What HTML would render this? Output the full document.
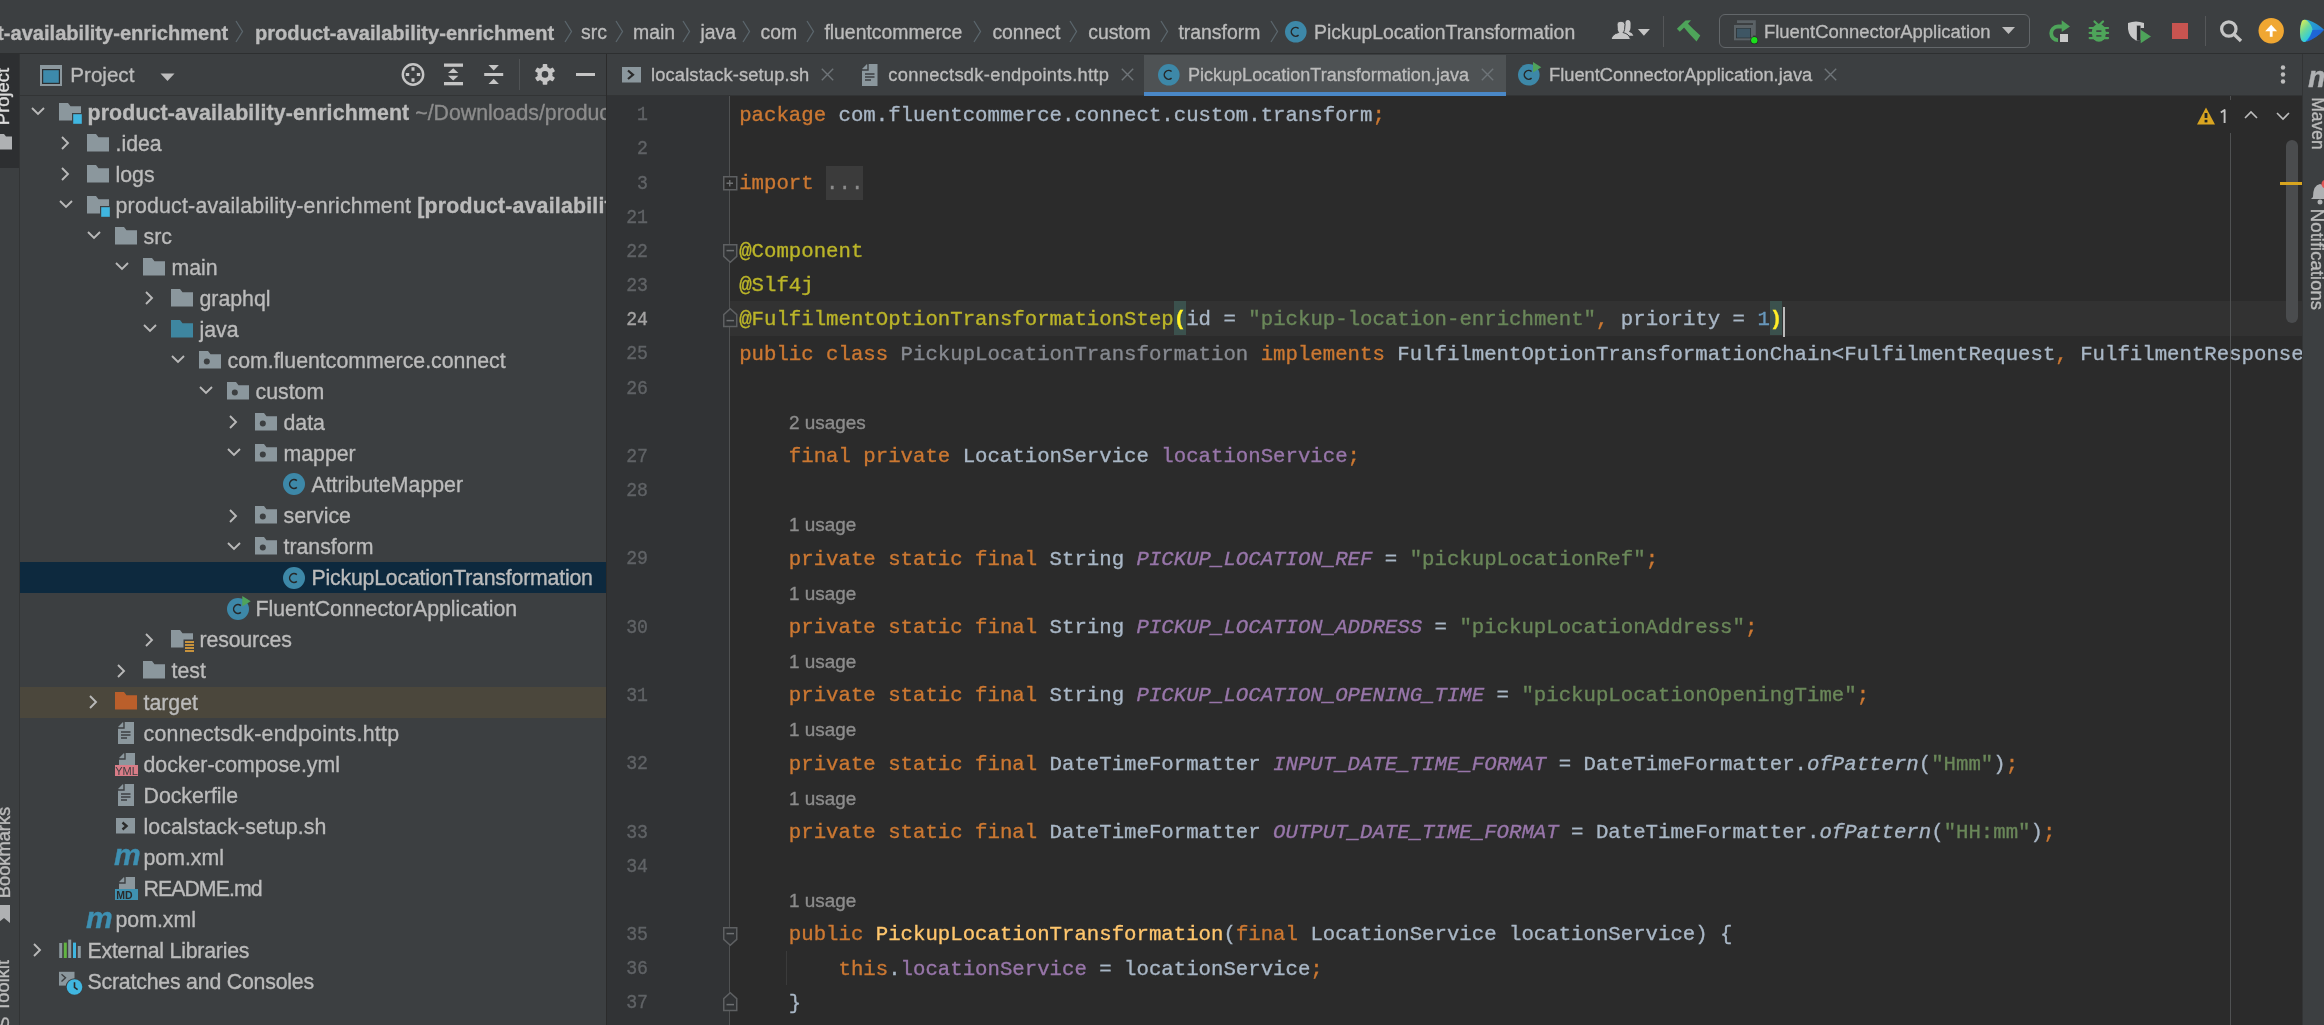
<!DOCTYPE html>
<html><head><meta charset="utf-8"><title>IntelliJ</title>
<style>
html,body{margin:0;padding:0;width:2324px;height:1025px;overflow:hidden;background:#3c3f41}
body{position:relative;font-family:"Liberation Sans",sans-serif}
svg{overflow:visible}
.root{position:absolute;left:0;top:0;width:2324px;height:1025px;overflow:hidden;will-change:transform}
.root div{-webkit-text-stroke-width:0.35px}
</style></head><body><div class="root">
<div style="position:absolute;left:0;top:0;width:2324px;height:1025px;background:#3c3f41"></div>
<div style="position:absolute;left:0px;top:53px;width:2324px;height:1px;background:#2d2f30;"></div>
<div style="position:absolute;left:0px;top:54px;width:19px;height:971px;background:#3c3f41;"></div>
<div style="position:absolute;left:0px;top:54px;width:19px;height:114px;background:#2d2f31;"></div>
<div style="position:absolute;left:19px;top:54px;width:1px;height:971px;background:#323435;"></div>
<div style="position:absolute;left:20px;top:95px;width:586px;height:1px;background:#323435;"></div>
<div style="position:absolute;left:606px;top:54px;width:1px;height:971px;background:#2b2b2b;"></div>
<div style="position:absolute;left:607px;top:95px;width:1696px;height:1px;background:#323435;"></div>
<div style="position:absolute;left:607px;top:96px;width:123px;height:929px;background:#313335;"></div>
<div style="position:absolute;left:730px;top:96px;width:1573px;height:929px;background:#2b2b2b;"></div>
<div style="position:absolute;left:2302px;top:54px;width:1px;height:971px;background:#323435;"></div>
<div style="position:absolute;left:-71.00px;top:22.69px;font:normal bold 20.1px/20.1px 'Liberation Sans',sans-serif;color:#bbbbbb;white-space:pre;letter-spacing:0px;">product-availability-enrichment</div>
<svg style="position:absolute;left:235px;top:20px;" width="9" height="24" viewBox="0 0 9 24"><path d="M1 1 L7.5 11.5 L1 22" fill="none" stroke="#5b666c" stroke-width="1.3"/></svg>
<div style="position:absolute;left:255.00px;top:22.69px;font:normal bold 20.1px/20.1px 'Liberation Sans',sans-serif;color:#bbbbbb;white-space:pre;letter-spacing:0px;">product-availability-enrichment</div>
<svg style="position:absolute;left:564px;top:20px;" width="9" height="24" viewBox="0 0 9 24"><path d="M1 1 L7.5 11.5 L1 22" fill="none" stroke="#5b666c" stroke-width="1.3"/></svg>
<div style="position:absolute;left:581.00px;top:23.28px;font:normal normal 19.4px/19.4px 'Liberation Sans',sans-serif;color:#bbbbbb;white-space:pre;letter-spacing:0px;">src</div>
<svg style="position:absolute;left:615px;top:20px;" width="9" height="24" viewBox="0 0 9 24"><path d="M1 1 L7.5 11.5 L1 22" fill="none" stroke="#5b666c" stroke-width="1.3"/></svg>
<div style="position:absolute;left:633.00px;top:23.28px;font:normal normal 19.4px/19.4px 'Liberation Sans',sans-serif;color:#bbbbbb;white-space:pre;letter-spacing:0px;">main</div>
<svg style="position:absolute;left:682px;top:20px;" width="9" height="24" viewBox="0 0 9 24"><path d="M1 1 L7.5 11.5 L1 22" fill="none" stroke="#5b666c" stroke-width="1.3"/></svg>
<div style="position:absolute;left:700.50px;top:23.28px;font:normal normal 19.4px/19.4px 'Liberation Sans',sans-serif;color:#bbbbbb;white-space:pre;letter-spacing:0px;">java</div>
<svg style="position:absolute;left:742px;top:20px;" width="9" height="24" viewBox="0 0 9 24"><path d="M1 1 L7.5 11.5 L1 22" fill="none" stroke="#5b666c" stroke-width="1.3"/></svg>
<div style="position:absolute;left:760.50px;top:23.28px;font:normal normal 19.4px/19.4px 'Liberation Sans',sans-serif;color:#bbbbbb;white-space:pre;letter-spacing:0px;">com</div>
<svg style="position:absolute;left:806px;top:20px;" width="9" height="24" viewBox="0 0 9 24"><path d="M1 1 L7.5 11.5 L1 22" fill="none" stroke="#5b666c" stroke-width="1.3"/></svg>
<div style="position:absolute;left:824.40px;top:23.28px;font:normal normal 19.4px/19.4px 'Liberation Sans',sans-serif;color:#bbbbbb;white-space:pre;letter-spacing:0px;">fluentcommerce</div>
<svg style="position:absolute;left:973px;top:20px;" width="9" height="24" viewBox="0 0 9 24"><path d="M1 1 L7.5 11.5 L1 22" fill="none" stroke="#5b666c" stroke-width="1.3"/></svg>
<div style="position:absolute;left:992.40px;top:23.28px;font:normal normal 19.4px/19.4px 'Liberation Sans',sans-serif;color:#bbbbbb;white-space:pre;letter-spacing:0px;">connect</div>
<svg style="position:absolute;left:1069px;top:20px;" width="9" height="24" viewBox="0 0 9 24"><path d="M1 1 L7.5 11.5 L1 22" fill="none" stroke="#5b666c" stroke-width="1.3"/></svg>
<div style="position:absolute;left:1088.20px;top:23.28px;font:normal normal 19.4px/19.4px 'Liberation Sans',sans-serif;color:#bbbbbb;white-space:pre;letter-spacing:0px;">custom</div>
<svg style="position:absolute;left:1160px;top:20px;" width="9" height="24" viewBox="0 0 9 24"><path d="M1 1 L7.5 11.5 L1 22" fill="none" stroke="#5b666c" stroke-width="1.3"/></svg>
<div style="position:absolute;left:1178.40px;top:23.28px;font:normal normal 19.4px/19.4px 'Liberation Sans',sans-serif;color:#bbbbbb;white-space:pre;letter-spacing:0px;">transform</div>
<svg style="position:absolute;left:1270px;top:20px;" width="9" height="24" viewBox="0 0 9 24"><path d="M1 1 L7.5 11.5 L1 22" fill="none" stroke="#5b666c" stroke-width="1.3"/></svg>
<svg style="position:absolute;left:1284.2px;top:19.7px;" width="23.6" height="23.6" viewBox="0 0 23.6 23.6"><circle cx="11.8" cy="11.8" r="10.8" fill="#3d88a8"/><path d="M15.40 8.50 A4.4 4.4 0 1 0 15.40 15.10" fill="none" stroke="#262829" stroke-width="1.50" transform="translate(-0.80 0)"/></svg>
<div style="position:absolute;left:1314.00px;top:23.28px;font:normal normal 19.4px/19.4px 'Liberation Sans',sans-serif;color:#bbbbbb;white-space:pre;letter-spacing:0px;">PickupLocationTransformation</div>
<svg style="position:absolute;left:1600px;top:15px;" width="60" height="30" viewBox="0 0 60 30"><path d="M25.5 7.5 Q25.5 5 28 5 Q30.5 5 30.6 8.5 L30.5 13 Q30.3 15.5 29 16.8 Q32.5 18 33.3 20.5 L33.2 20.8 L25 20.8 Q24 18 21.5 16.5 Q22.5 15 24.5 14.5 Z" fill="#c5c5c5"/><path d="M17 9 Q17 6.2 21 6.2 Q25 6.2 25 9.5 L24.6 14.5 Q24.2 16.7 23 17.5 Q29.5 19 30.5 24.5 L11 24.5 Q12 19 18.7 17.5 Q17.6 16.5 17.3 14.5 Z" fill="#c5c5c5" stroke="#3c3f41" stroke-width="1"/><path d="M37.9 14 L49.9 14 L43.9 20.8Z" fill="#c5c5c5"/></svg>
<div style="position:absolute;left:1663px;top:16px;width:1px;height:31px;background:#555759;"></div>
<svg style="position:absolute;left:1674px;top:17px;" width="30" height="27" viewBox="0 0 30 27"><path d="M2.9 11.7 L11.5 3.6 L17 3.2 L13.5 7.3 L5.8 14.8 Z" fill="#4ea45a"/><path d="M9.2 9.6 L13 5.8 L19.5 12.2 L26.3 18.5 L22.5 24.5 L15.5 17 Z" fill="#4ea45a"/></svg>
<div style="position:absolute;left:1719px;top:14px;width:309px;height:32px;border:1.6px solid #63676a;border-radius:6px"></div>
<svg style="position:absolute;left:1733px;top:19px;" width="26" height="26" viewBox="0 0 26 26"><path d="M4 1.2 L22.8 1.2 L22.8 16.5 L20 16.5 L20 4.1 L4 4.1Z" fill="#5b6266"/><rect x="1" y="6" width="19" height="15.3" fill="#5b6266"/><rect x="3" y="9" width="15" height="10.3" fill="#2f3436"/><rect x="3.8" y="9.6" width="13.4" height="9" fill="#3e5664"/><circle cx="21.3" cy="21.3" r="3.9" fill="#242628"/><circle cx="21.3" cy="21.3" r="3.2" fill="#1be01b"/></svg>
<div style="position:absolute;left:1764.00px;top:22.58px;font:normal normal 18.45px/18.45px 'Liberation Sans',sans-serif;color:#bbbbbb;white-space:pre;letter-spacing:0px;">FluentConnectorApplication</div>
<svg style="position:absolute;left:2002px;top:27px;" width="14" height="8" viewBox="0 0 14 8"><path d="M0 0 L13 0 L6.5 7Z" fill="#bdbdbd"/></svg>
<svg style="position:absolute;left:2048px;top:20px;" width="24" height="24" viewBox="0 0 24 24"><path d="M14 6.5 L10 6.5 A6.8 6.8 0 0 0 10 20.1" fill="none" stroke="#4ea45a" stroke-width="3.8"/><path d="M13.7 0.3 L22 6.5 L13.7 12.1Z" fill="#4ea45a"/><rect x="11.3" y="13.3" width="9.4" height="9.2" fill="#3c3f41"/><rect x="12" y="14" width="8" height="8" fill="#c9c9c9"/></svg>
<svg style="position:absolute;left:2088px;top:20px;" width="22" height="24" viewBox="0 0 22 24"><path d="M6.5 1.5 L10.6 5.5 M15 1.5 L10.9 5.5" stroke="#4ea45a" stroke-width="2.3" stroke-linecap="round"/><ellipse cx="10.9" cy="12.8" rx="7.3" ry="9" fill="#4ea45a"/><path d="M1.6 8 L20.1 8 M1.6 12.9 L20.1 12.9 M1.6 18.1 L20.1 18.1" stroke="#4ea45a" stroke-width="2.1" stroke-linecap="round"/><path d="M1 10.4 L4 10.4 M1 15.5 L4.2 15.5 M17.6 10.4 L21 10.4 M17.6 15.5 L21 15.5" stroke="#3c3f41" stroke-width="1.6"/><rect x="8.3" y="10.3" width="5.1" height="1.6" fill="#3c3f41"/><rect x="8.3" y="15.2" width="5.1" height="1.4" fill="#3c3f41"/></svg>
<svg style="position:absolute;left:2126px;top:19px;" width="28" height="26" viewBox="0 0 28 26"><path d="M2 4 Q10 1 18 4 L18 9 L14.5 9 L14.5 21 L10 21.5 Q3 18 2 10 Z" fill="#c8c8c8"/><rect x="10.6" y="6.6" width="3.9" height="14.6" fill="#2f3133"/><rect x="9.6" y="6.6" width="1" height="14.6" fill="#c8c8c8"/><path d="M14.7 10.8 L25 17.5 L14.7 24.2Z" fill="#4ea45a"/></svg>
<div style="position:absolute;left:2172px;top:23px;width:15.5px;height:16px;background:#c75450;"></div>
<div style="position:absolute;left:2205px;top:15.6px;width:1px;height:30.7px;background:#555759;"></div>
<svg style="position:absolute;left:2218px;top:18px;" width="26" height="26" viewBox="0 0 26 26"><circle cx="10.8" cy="11" r="7.2" fill="none" stroke="#c5c5c5" stroke-width="3.2"/><path d="M16.2 16.5 L23 23" stroke="#c5c5c5" stroke-width="3.3"/></svg>
<svg style="position:absolute;left:2257px;top:17px;" width="28" height="28" viewBox="0 0 28 28"><circle cx="14.2" cy="13.8" r="12.7" fill="#f0a732"/><path d="M14.2 7.8 L20.1 14.2 L8.2 14.2Z" fill="#fff"/><rect x="12.8" y="13" width="2.8" height="6.8" fill="#fff"/></svg>
<svg style="position:absolute;left:2299px;top:19px;" width="30" height="25" viewBox="0 0 30 25"><defs><linearGradient id="jbg" x1="0" y1="0" x2="0.6" y2="1"><stop offset="0" stop-color="#f3f245"/><stop offset="0.5" stop-color="#6ed99a"/><stop offset="1" stop-color="#1ec8f0"/></linearGradient><linearGradient id="jbb" x1="0" y1="0" x2="1" y2="1"><stop offset="0" stop-color="#2ab7c9"/><stop offset="1" stop-color="#1f6fe0"/></linearGradient></defs><path d="M3 2 Q5 0 9 1 Q18 4 25 10.8 Q18 19 6 23 Q2 23 1.5 18 Q0 10 3 2Z" fill="url(#jbb)"/><path d="M3 2 Q5 0 8 1.5 Q13 6 13.5 11 Q12 17 6 23 Q2 23 1.5 18 Q0 10 3 2Z" fill="url(#jbg)"/><path d="M13.5 11 L25 10.8 Q18 19 8 22.8 Q12 17 13.5 11Z" fill="#1d5fd6" opacity="0.85"/></svg>
<svg style="position:absolute;left:40px;top:65px;" width="22" height="21" viewBox="0 0 22 21"><rect x="0" y="0" width="22" height="21" fill="#8c989e"/><rect x="2" y="4" width="18" height="15" fill="#2c2e30"/><rect x="3.2" y="5.2" width="15.6" height="12.6" fill="#3d8aab"/></svg>
<div style="position:absolute;left:70.30px;top:65.16px;font:normal normal 20.6px/20.6px 'Liberation Sans',sans-serif;color:#bbbbbb;white-space:pre;letter-spacing:0px;">Project</div>
<svg style="position:absolute;left:160px;top:73px;" width="15" height="9" viewBox="0 0 15 9"><path d="M0.5 0.5 L14.5 0.5 L7.5 8Z" fill="#bdbdbd"/></svg>
<svg style="position:absolute;left:401px;top:63px;" width="24" height="24" viewBox="0 0 24 24"><circle cx="12" cy="11.5" r="10.2" fill="none" stroke="#c5c5c5" stroke-width="2.4"/><path d="M12 4.3 L12 7.7 M12 15.3 L12 18.7 M4.8 11.5 L8.2 11.5 M15.8 11.5 L19.2 11.5" stroke="#c5c5c5" stroke-width="3"/></svg>
<svg style="position:absolute;left:443px;top:62px;" width="21" height="25" viewBox="0 0 21 25"><rect x="1" y="1.5" width="19" height="3.3" fill="#c5c5c5"/><rect x="1" y="20" width="19" height="3.3" fill="#c5c5c5"/><path d="M5 11 L10.2 6.3 L15.4 11Z M5 13.8 L10.2 18.6 L15.4 13.8Z" fill="#c5c5c5"/></svg>
<svg style="position:absolute;left:483px;top:62px;" width="21" height="25" viewBox="0 0 21 25"><rect x="1.2" y="11" width="19" height="3" fill="#c5c5c5"/><path d="M5.5 3 L15.9 3 L10.7 8.6Z M5.5 21.9 L15.9 21.9 L10.7 16.7Z" fill="#c5c5c5"/></svg>
<div style="position:absolute;left:518.5px;top:59px;width:1px;height:31px;background:#505355;"></div>
<svg style="position:absolute;left:535px;top:63px;" width="21" height="24" viewBox="0 0 21 24"><g transform="translate(10 11.4)"><rect x="-2.3" y="-10.3" width="4.6" height="5" rx="0.8" fill="#c5c5c5" transform="rotate(0)"/><rect x="-2.3" y="-10.3" width="4.6" height="5" rx="0.8" fill="#c5c5c5" transform="rotate(60)"/><rect x="-2.3" y="-10.3" width="4.6" height="5" rx="0.8" fill="#c5c5c5" transform="rotate(120)"/><rect x="-2.3" y="-10.3" width="4.6" height="5" rx="0.8" fill="#c5c5c5" transform="rotate(180)"/><rect x="-2.3" y="-10.3" width="4.6" height="5" rx="0.8" fill="#c5c5c5" transform="rotate(240)"/><rect x="-2.3" y="-10.3" width="4.6" height="5" rx="0.8" fill="#c5c5c5" transform="rotate(300)"/><circle r="7.6" fill="#c5c5c5"/><circle r="3.3" fill="#3c3f41"/></g></svg>
<div style="position:absolute;left:576px;top:73px;width:19px;height:3px;background:#c5c5c5;"></div>
<div style="position:absolute;left:-33.5px;top:87px;width:70px;height:19px;transform:rotate(-90deg);font:18.4px/19px 'Liberation Sans',sans-serif;color:#dcdcdc;text-align:center">Project</div>
<svg style="position:absolute;left:0px;top:134px;" width="13" height="16" viewBox="0 0 13 16"><path d="M-3 0 L4 0 L6 2.5 L12 2.5 L12 15.5 L-3 15.5Z" fill="#afb1b3"/></svg>
<div style="position:absolute;left:-47.5px;top:843px;width:100px;height:19px;transform:rotate(-90deg);font:18.3px/19px 'Liberation Sans',sans-serif;color:#bbbbbb;text-align:center">Bookmarks</div>
<svg style="position:absolute;left:0px;top:905px;" width="12" height="20" viewBox="0 0 12 20"><path d="M-2 0 L10 0 L10 18 L4 13 L-2 18Z" fill="#afb1b3"/></svg>
<div style="position:absolute;left:-58px;top:988px;width:120px;height:19px;transform:rotate(-90deg);font:18.3px/19px 'Liberation Sans',sans-serif;color:#bbbbbb;text-align:left;white-space:nowrap">AWS Toolkit</div>
<div style="position:absolute;left:20px;top:562.2px;width:585.5px;height:30.8px;background:#0d293e;"></div>
<div style="position:absolute;left:20px;top:686.5px;width:585.5px;height:31px;background:#4b473c;"></div>
<div style="position:absolute;left:0;top:0;width:605.5px;height:1025px;overflow:hidden">
<svg style="position:absolute;left:31.1px;top:107.0px;" width="14" height="9" viewBox="0 0 14 9"><path d="M1 1 L7 7 L13 1" fill="none" stroke="#b9b9b9" stroke-width="1.9"/></svg>
<svg style="position:absolute;left:59px;top:102.5px;" width="24" height="22" viewBox="0 0 24 22"><path d="M0 0 L9 0 L11.5 3.2 L22 3.2 L22 17.5 L0 17.5Z" fill="#8b979d"/><rect x="13" y="10" width="11" height="12" fill="#3c3f41"/><rect x="14.2" y="11.2" width="8.6" height="9.6" fill="#40b6e0"/></svg>
<div style="position:absolute;left:87.5px;top:102.77px;font:21.3px/21.3px 'Liberation Sans',sans-serif;color:#bbbbbb;white-space:pre"><span style="font-weight:bold;color:#bbbbbb;letter-spacing:0.15px">product-availability-enrichment</span><span style="font-weight:normal;color:#8c8c8c;letter-spacing:0px"> ~/Downloads/product-availability-enrichment</span></div>
<svg style="position:absolute;left:60.599999999999994px;top:136.04px;" width="9" height="14" viewBox="0 0 9 14"><path d="M1 1 L7 7 L1 13" fill="none" stroke="#b9b9b9" stroke-width="1.9"/></svg>
<svg style="position:absolute;left:87px;top:133.54px;" width="22" height="18" viewBox="0 0 22 18"><path d="M0 0 L9 0 L11.5 3.2 L22 3.2 L22 17.5 L0 17.5Z" fill="#8b979d"/></svg>
<div style="position:absolute;left:115.5px;top:133.81px;font:21.3px/21.3px 'Liberation Sans',sans-serif;color:#bbbbbb;white-space:pre"><span style="font-weight:normal;color:#bbbbbb;letter-spacing:0px">.idea</span></div>
<svg style="position:absolute;left:60.599999999999994px;top:167.07999999999998px;" width="9" height="14" viewBox="0 0 9 14"><path d="M1 1 L7 7 L1 13" fill="none" stroke="#b9b9b9" stroke-width="1.9"/></svg>
<svg style="position:absolute;left:87px;top:164.57999999999998px;" width="22" height="18" viewBox="0 0 22 18"><path d="M0 0 L9 0 L11.5 3.2 L22 3.2 L22 17.5 L0 17.5Z" fill="#8b979d"/></svg>
<div style="position:absolute;left:115.5px;top:164.85px;font:21.3px/21.3px 'Liberation Sans',sans-serif;color:#bbbbbb;white-space:pre"><span style="font-weight:normal;color:#bbbbbb;letter-spacing:0px">logs</span></div>
<svg style="position:absolute;left:59.099999999999994px;top:200.12px;" width="14" height="9" viewBox="0 0 14 9"><path d="M1 1 L7 7 L13 1" fill="none" stroke="#b9b9b9" stroke-width="1.9"/></svg>
<svg style="position:absolute;left:87px;top:195.62px;" width="24" height="22" viewBox="0 0 24 22"><path d="M0 0 L9 0 L11.5 3.2 L22 3.2 L22 17.5 L0 17.5Z" fill="#8b979d"/><rect x="13" y="10" width="11" height="12" fill="#3c3f41"/><rect x="14.2" y="11.2" width="8.6" height="9.6" fill="#40b6e0"/></svg>
<div style="position:absolute;left:115.5px;top:195.89px;font:21.3px/21.3px 'Liberation Sans',sans-serif;color:#bbbbbb;white-space:pre"><span style="font-weight:normal;color:#bbbbbb;letter-spacing:0.22px">product-availability-enrichment </span><span style="font-weight:bold;color:#bbbbbb;letter-spacing:0.2px">[product-availability-enrichment]</span></div>
<svg style="position:absolute;left:87.1px;top:231.16px;" width="14" height="9" viewBox="0 0 14 9"><path d="M1 1 L7 7 L13 1" fill="none" stroke="#b9b9b9" stroke-width="1.9"/></svg>
<svg style="position:absolute;left:115px;top:226.66px;" width="22" height="18" viewBox="0 0 22 18"><path d="M0 0 L9 0 L11.5 3.2 L22 3.2 L22 17.5 L0 17.5Z" fill="#8b979d"/></svg>
<div style="position:absolute;left:143.5px;top:226.93px;font:21.3px/21.3px 'Liberation Sans',sans-serif;color:#bbbbbb;white-space:pre"><span style="font-weight:normal;color:#bbbbbb;letter-spacing:0px">src</span></div>
<svg style="position:absolute;left:115.1px;top:262.2px;" width="14" height="9" viewBox="0 0 14 9"><path d="M1 1 L7 7 L13 1" fill="none" stroke="#b9b9b9" stroke-width="1.9"/></svg>
<svg style="position:absolute;left:143px;top:257.7px;" width="22" height="18" viewBox="0 0 22 18"><path d="M0 0 L9 0 L11.5 3.2 L22 3.2 L22 17.5 L0 17.5Z" fill="#8b979d"/></svg>
<div style="position:absolute;left:171.5px;top:257.97px;font:21.3px/21.3px 'Liberation Sans',sans-serif;color:#bbbbbb;white-space:pre"><span style="font-weight:normal;color:#bbbbbb;letter-spacing:0px">main</span></div>
<svg style="position:absolute;left:144.6px;top:291.24px;" width="9" height="14" viewBox="0 0 9 14"><path d="M1 1 L7 7 L1 13" fill="none" stroke="#b9b9b9" stroke-width="1.9"/></svg>
<svg style="position:absolute;left:171px;top:288.74px;" width="22" height="18" viewBox="0 0 22 18"><path d="M0 0 L9 0 L11.5 3.2 L22 3.2 L22 17.5 L0 17.5Z" fill="#8b979d"/></svg>
<div style="position:absolute;left:199.5px;top:289.01px;font:21.3px/21.3px 'Liberation Sans',sans-serif;color:#bbbbbb;white-space:pre"><span style="font-weight:normal;color:#bbbbbb;letter-spacing:0px">graphql</span></div>
<svg style="position:absolute;left:143.1px;top:324.28px;" width="14" height="9" viewBox="0 0 14 9"><path d="M1 1 L7 7 L13 1" fill="none" stroke="#b9b9b9" stroke-width="1.9"/></svg>
<svg style="position:absolute;left:171px;top:319.78px;" width="22" height="18" viewBox="0 0 22 18"><path d="M0 0 L9 0 L11.5 3.2 L22 3.2 L22 17.5 L0 17.5Z" fill="#3e86a0"/></svg>
<div style="position:absolute;left:199.5px;top:320.05px;font:21.3px/21.3px 'Liberation Sans',sans-serif;color:#bbbbbb;white-space:pre"><span style="font-weight:normal;color:#bbbbbb;letter-spacing:0px">java</span></div>
<svg style="position:absolute;left:171.1px;top:355.32px;" width="14" height="9" viewBox="0 0 14 9"><path d="M1 1 L7 7 L13 1" fill="none" stroke="#b9b9b9" stroke-width="1.9"/></svg>
<svg style="position:absolute;left:199px;top:350.82px;" width="22" height="18" viewBox="0 0 22 18"><path d="M0 0 L9 0 L11.5 3.2 L22 3.2 L22 17.5 L0 17.5Z" fill="#8b979d"/><circle cx="7.8" cy="10.6" r="3" fill="#3c3f41"/></svg>
<div style="position:absolute;left:227.5px;top:351.09px;font:21.3px/21.3px 'Liberation Sans',sans-serif;color:#bbbbbb;white-space:pre"><span style="font-weight:normal;color:#bbbbbb;letter-spacing:0px">com.fluentcommerce.connect</span></div>
<svg style="position:absolute;left:199.1px;top:386.36px;" width="14" height="9" viewBox="0 0 14 9"><path d="M1 1 L7 7 L13 1" fill="none" stroke="#b9b9b9" stroke-width="1.9"/></svg>
<svg style="position:absolute;left:227px;top:381.86px;" width="22" height="18" viewBox="0 0 22 18"><path d="M0 0 L9 0 L11.5 3.2 L22 3.2 L22 17.5 L0 17.5Z" fill="#8b979d"/><circle cx="7.8" cy="10.6" r="3" fill="#3c3f41"/></svg>
<div style="position:absolute;left:255.5px;top:382.13px;font:21.3px/21.3px 'Liberation Sans',sans-serif;color:#bbbbbb;white-space:pre"><span style="font-weight:normal;color:#bbbbbb;letter-spacing:0px">custom</span></div>
<svg style="position:absolute;left:228.6px;top:415.4px;" width="9" height="14" viewBox="0 0 9 14"><path d="M1 1 L7 7 L1 13" fill="none" stroke="#b9b9b9" stroke-width="1.9"/></svg>
<svg style="position:absolute;left:255px;top:412.9px;" width="22" height="18" viewBox="0 0 22 18"><path d="M0 0 L9 0 L11.5 3.2 L22 3.2 L22 17.5 L0 17.5Z" fill="#8b979d"/><circle cx="7.8" cy="10.6" r="3" fill="#3c3f41"/></svg>
<div style="position:absolute;left:283.5px;top:413.17px;font:21.3px/21.3px 'Liberation Sans',sans-serif;color:#bbbbbb;white-space:pre"><span style="font-weight:normal;color:#bbbbbb;letter-spacing:0px">data</span></div>
<svg style="position:absolute;left:227.1px;top:448.44px;" width="14" height="9" viewBox="0 0 14 9"><path d="M1 1 L7 7 L13 1" fill="none" stroke="#b9b9b9" stroke-width="1.9"/></svg>
<svg style="position:absolute;left:255px;top:443.94px;" width="22" height="18" viewBox="0 0 22 18"><path d="M0 0 L9 0 L11.5 3.2 L22 3.2 L22 17.5 L0 17.5Z" fill="#8b979d"/><circle cx="7.8" cy="10.6" r="3" fill="#3c3f41"/></svg>
<div style="position:absolute;left:283.5px;top:444.21px;font:21.3px/21.3px 'Liberation Sans',sans-serif;color:#bbbbbb;white-space:pre"><span style="font-weight:normal;color:#bbbbbb;letter-spacing:0px">mapper</span></div>
<svg style="position:absolute;left:282px;top:472.48px;" width="24" height="24" viewBox="0 0 24 24"><circle cx="12" cy="12" r="11" fill="#3d88a8"/><path d="M15.67 8.64 A4.4 4.4 0 1 0 15.67 15.36" fill="none" stroke="#262829" stroke-width="1.53" transform="translate(-0.81 0)"/></svg>
<div style="position:absolute;left:311.5px;top:475.25px;font:21.3px/21.3px 'Liberation Sans',sans-serif;color:#bbbbbb;white-space:pre"><span style="font-weight:normal;color:#bbbbbb;letter-spacing:0px">AttributeMapper</span></div>
<svg style="position:absolute;left:228.6px;top:508.52px;" width="9" height="14" viewBox="0 0 9 14"><path d="M1 1 L7 7 L1 13" fill="none" stroke="#b9b9b9" stroke-width="1.9"/></svg>
<svg style="position:absolute;left:255px;top:506.02px;" width="22" height="18" viewBox="0 0 22 18"><path d="M0 0 L9 0 L11.5 3.2 L22 3.2 L22 17.5 L0 17.5Z" fill="#8b979d"/><circle cx="7.8" cy="10.6" r="3" fill="#3c3f41"/></svg>
<div style="position:absolute;left:283.5px;top:506.29px;font:21.3px/21.3px 'Liberation Sans',sans-serif;color:#bbbbbb;white-space:pre"><span style="font-weight:normal;color:#bbbbbb;letter-spacing:0px">service</span></div>
<svg style="position:absolute;left:227.1px;top:541.56px;" width="14" height="9" viewBox="0 0 14 9"><path d="M1 1 L7 7 L13 1" fill="none" stroke="#b9b9b9" stroke-width="1.9"/></svg>
<svg style="position:absolute;left:255px;top:537.06px;" width="22" height="18" viewBox="0 0 22 18"><path d="M0 0 L9 0 L11.5 3.2 L22 3.2 L22 17.5 L0 17.5Z" fill="#8b979d"/><circle cx="7.8" cy="10.6" r="3" fill="#3c3f41"/></svg>
<div style="position:absolute;left:283.5px;top:537.33px;font:21.3px/21.3px 'Liberation Sans',sans-serif;color:#bbbbbb;white-space:pre"><span style="font-weight:normal;color:#bbbbbb;letter-spacing:0px">transform</span></div>
<svg style="position:absolute;left:282px;top:565.5999999999999px;" width="24" height="24" viewBox="0 0 24 24"><circle cx="12" cy="12" r="11" fill="#3d88a8"/><path d="M15.67 8.64 A4.4 4.4 0 1 0 15.67 15.36" fill="none" stroke="#262829" stroke-width="1.53" transform="translate(-0.81 0)"/></svg>
<div style="position:absolute;left:311.5px;top:568.37px;font:21.3px/21.3px 'Liberation Sans',sans-serif;color:#bbbbbb;white-space:pre"><span style="font-weight:normal;color:#bbbbbb;letter-spacing:-0.2px">PickupLocationTransformation</span></div>
<svg style="position:absolute;left:226px;top:596.64px;" width="24" height="24" viewBox="0 0 24 24"><circle cx="12" cy="12" r="11" fill="#3d88a8"/><path d="M15.67 8.64 A4.4 4.4 0 1 0 15.67 15.36" fill="none" stroke="#262829" stroke-width="1.53" transform="translate(-0.81 0)"/><path d="M16.28 -1.02 L24.73 4.28 L16.28 9.57 Z" fill="#4fa35b"/></svg>
<div style="position:absolute;left:255.5px;top:599.41px;font:21.3px/21.3px 'Liberation Sans',sans-serif;color:#bbbbbb;white-space:pre"><span style="font-weight:normal;color:#bbbbbb;letter-spacing:0px">FluentConnectorApplication</span></div>
<svg style="position:absolute;left:144.6px;top:632.68px;" width="9" height="14" viewBox="0 0 9 14"><path d="M1 1 L7 7 L1 13" fill="none" stroke="#b9b9b9" stroke-width="1.9"/></svg>
<svg style="position:absolute;left:171px;top:630.18px;" width="24" height="22" viewBox="0 0 24 22"><path d="M0 0 L9 0 L11.5 3.2 L22 3.2 L22 17.5 L0 17.5Z" fill="#8b979d"/><rect x="12.5" y="9.5" width="11" height="12" fill="#3c3f41"/><path d="M14 12 L23 12 M14 15 L23 15 M14 18 L23 18 M14 21 L23 21" stroke="#f4af3d" stroke-width="1.6"/></svg>
<div style="position:absolute;left:199.5px;top:630.45px;font:21.3px/21.3px 'Liberation Sans',sans-serif;color:#bbbbbb;white-space:pre"><span style="font-weight:normal;color:#bbbbbb;letter-spacing:-0.15px">resources</span></div>
<svg style="position:absolute;left:116.6px;top:663.72px;" width="9" height="14" viewBox="0 0 9 14"><path d="M1 1 L7 7 L1 13" fill="none" stroke="#b9b9b9" stroke-width="1.9"/></svg>
<svg style="position:absolute;left:143px;top:661.22px;" width="22" height="18" viewBox="0 0 22 18"><path d="M0 0 L9 0 L11.5 3.2 L22 3.2 L22 17.5 L0 17.5Z" fill="#8b979d"/></svg>
<div style="position:absolute;left:171.5px;top:661.49px;font:21.3px/21.3px 'Liberation Sans',sans-serif;color:#bbbbbb;white-space:pre"><span style="font-weight:normal;color:#bbbbbb;letter-spacing:0px">test</span></div>
<svg style="position:absolute;left:88.6px;top:694.76px;" width="9" height="14" viewBox="0 0 9 14"><path d="M1 1 L7 7 L1 13" fill="none" stroke="#b9b9b9" stroke-width="1.9"/></svg>
<svg style="position:absolute;left:115px;top:692.26px;" width="22" height="18" viewBox="0 0 22 18"><path d="M0 0 L9 0 L11.5 3.2 L22 3.2 L22 17.5 L0 17.5Z" fill="#ba5f2b"/></svg>
<div style="position:absolute;left:143.5px;top:692.53px;font:21.3px/21.3px 'Liberation Sans',sans-serif;color:#bbbbbb;white-space:pre"><span style="font-weight:normal;color:#bbbbbb;letter-spacing:0px">target</span></div>
<svg style="position:absolute;left:118.2px;top:721.8px;" width="16" height="22" viewBox="0 0 16 22"><path d="M6 0 L16 0 L16 22 L0 22 L0 6Z" fill="#8b979d"/><path d="M0 5 L5 0 L5 5Z" fill="#8b979d"/><path d="M0 6 L6 6 L6 0" fill="none" stroke="#3c3f41" stroke-width="1.4"/><path d="M3 10 L12.5 10 M3 13 L12.5 13 M3 16 L9 16" stroke="#3c3f41" stroke-width="1.4"/></svg>
<div style="position:absolute;left:143.5px;top:723.57px;font:21.3px/21.3px 'Liberation Sans',sans-serif;color:#bbbbbb;white-space:pre"><span style="font-weight:normal;color:#bbbbbb;letter-spacing:0.29px">connectsdk-endpoints.http</span></div>
<svg style="position:absolute;left:115px;top:752.84px;" width="23" height="23" viewBox="0 0 23 23"><path d="M10 0 L20 0 L20 12 L4 12 L4 6Z" fill="#8b979d"/><path d="M4 5 L9 0 L9 5Z" fill="#8b979d"/><path d="M4 6 L10 6 L10 0" fill="none" stroke="#3c3f41" stroke-width="1.4"/><rect x="0" y="12" width="23" height="11" fill="#d97c87"/><text x="11.5" y="21.5" text-anchor="middle" font-family="Liberation Sans" font-size="11" fill="#3c3f41">YML</text></svg>
<div style="position:absolute;left:143.5px;top:754.61px;font:21.3px/21.3px 'Liberation Sans',sans-serif;color:#bbbbbb;white-space:pre"><span style="font-weight:normal;color:#bbbbbb;letter-spacing:0px">docker-compose.yml</span></div>
<svg style="position:absolute;left:118.2px;top:783.88px;" width="16" height="22" viewBox="0 0 16 22"><path d="M6 0 L16 0 L16 22 L0 22 L0 6Z" fill="#8b979d"/><path d="M0 5 L5 0 L5 5Z" fill="#8b979d"/><path d="M0 6 L6 6 L6 0" fill="none" stroke="#3c3f41" stroke-width="1.4"/><path d="M3 10 L12.5 10 M3 13 L12.5 13 M3 16 L9 16" stroke="#3c3f41" stroke-width="1.4"/></svg>
<div style="position:absolute;left:143.5px;top:785.65px;font:21.3px/21.3px 'Liberation Sans',sans-serif;color:#bbbbbb;white-space:pre"><span style="font-weight:normal;color:#bbbbbb;letter-spacing:0px">Dockerfile</span></div>
<svg style="position:absolute;left:116.2px;top:817.92px;" width="20" height="17" viewBox="0 0 20 17"><rect x="0" y="0" width="19" height="15.5" fill="#8b979d"/><path d="M6.5 4.5 L10.5 8 L6.5 11.5" fill="none" stroke="#2b2b2b" stroke-width="2.4"/></svg>
<div style="position:absolute;left:143.5px;top:816.69px;font:21.3px/21.3px 'Liberation Sans',sans-serif;color:#bbbbbb;white-space:pre"><span style="font-weight:normal;color:#bbbbbb;letter-spacing:0.1px">localstack-setup.sh</span></div>
<div style="position:absolute;left:114px;top:840.46px;font:italic bold 30px/30px 'Liberation Sans',sans-serif;color:#3e90b2;letter-spacing:-1px">m</div>
<div style="position:absolute;left:143.5px;top:847.73px;font:21.3px/21.3px 'Liberation Sans',sans-serif;color:#bbbbbb;white-space:pre"><span style="font-weight:normal;color:#bbbbbb;letter-spacing:0px">pom.xml</span></div>
<svg style="position:absolute;left:115px;top:877.0px;" width="23" height="23" viewBox="0 0 23 23"><path d="M10 0 L20 0 L20 12 L4 12 L4 6Z" fill="#8b979d"/><path d="M4 5 L9 0 L9 5Z" fill="#8b979d"/><path d="M4 6 L10 6 L10 0" fill="none" stroke="#3c3f41" stroke-width="1.4"/><rect x="0" y="12" width="23" height="11" fill="#3f91b0"/><text x="9.5" y="21.8" text-anchor="middle" font-family="Liberation Sans" font-weight="bold" font-size="10.5" fill="#2b2b2b">MD</text></svg>
<div style="position:absolute;left:143.5px;top:878.77px;font:21.3px/21.3px 'Liberation Sans',sans-serif;color:#bbbbbb;white-space:pre"><span style="font-weight:normal;color:#bbbbbb;letter-spacing:-0.95px">README.md</span></div>
<div style="position:absolute;left:86px;top:902.54px;font:italic bold 30px/30px 'Liberation Sans',sans-serif;color:#3e90b2;letter-spacing:-1px">m</div>
<div style="position:absolute;left:115.5px;top:909.81px;font:21.3px/21.3px 'Liberation Sans',sans-serif;color:#bbbbbb;white-space:pre"><span style="font-weight:normal;color:#bbbbbb;letter-spacing:0px">pom.xml</span></div>
<svg style="position:absolute;left:32.599999999999994px;top:943.0799999999999px;" width="9" height="14" viewBox="0 0 9 14"><path d="M1 1 L7 7 L1 13" fill="none" stroke="#b9b9b9" stroke-width="1.9"/></svg>
<svg style="position:absolute;left:59px;top:940.0799999999999px;" width="22" height="19" viewBox="0 0 22 19"><rect x="0.2" y="3" width="3" height="15" fill="#8b979d"/><rect x="4.8" y="2.6" width="3" height="15.4" fill="#62b543"/><rect x="9.2" y="-0.4" width="3" height="18.4" fill="#8b979d"/><rect x="14" y="2.6" width="3" height="15.4" fill="#40b6e0"/><rect x="18.8" y="6" width="3" height="12" fill="#8b979d"/></svg>
<div style="position:absolute;left:87.5px;top:940.85px;font:21.3px/21.3px 'Liberation Sans',sans-serif;color:#bbbbbb;white-space:pre"><span style="font-weight:normal;color:#bbbbbb;letter-spacing:-0.22px">External Libraries</span></div>
<svg style="position:absolute;left:59px;top:971.12px;" width="26" height="26" viewBox="0 0 26 26"><rect x="0" y="0.8" width="15.5" height="13.8" fill="#8b979d"/><path d="M2.5 3.2 L6.5 6.8 L2.5 10.4" fill="none" stroke="#3c3f41" stroke-width="1.4"/><circle cx="15.5" cy="16" r="8.8" fill="#3c3f41"/><circle cx="15.5" cy="16" r="7.8" fill="#40b6e0"/><path d="M15.5 11.2 L15.5 16.3 L18.6 18.6" fill="none" stroke="#2b2b2b" stroke-width="1.6"/></svg>
<div style="position:absolute;left:87.5px;top:971.89px;font:21.3px/21.3px 'Liberation Sans',sans-serif;color:#bbbbbb;white-space:pre"><span style="font-weight:normal;color:#bbbbbb;letter-spacing:-0.2px">Scratches and Consoles</span></div>
</div>
<svg style="position:absolute;left:622px;top:66.5px;" width="20" height="16" viewBox="0 0 20 16"><rect x="0" y="0" width="19" height="15.5" fill="#8b979d"/><path d="M6 3.5 L11 7.8 L6 12" fill="none" stroke="#2b2b2b" stroke-width="2.2"/></svg>
<div style="position:absolute;left:651.00px;top:65.51px;font:normal normal 18.3px/18.3px 'Liberation Sans',sans-serif;color:#bbbbbb;white-space:pre;letter-spacing:0.15px;">localstack-setup.sh</div>
<svg style="position:absolute;left:821.3px;top:68.0px;" width="13" height="13" viewBox="0 0 13 13"><path d="M0.8 0.8 L12.2 12.2 M12.2 0.8 L0.8 12.2" stroke="#6e7478" stroke-width="1.4"/></svg>
<svg style="position:absolute;left:861.5px;top:63.5px;" width="16" height="22" viewBox="0 0 16 22"><path d="M6 0 L15.5 0 L15.5 22 L0 22 L0 6Z" fill="#8b979d"/><path d="M0 5 L5 0 L5 5Z" fill="#8b979d"/><path d="M0 6 L6 6 L6 0" fill="none" stroke="#3c3f41" stroke-width="1.4"/><path d="M3 10 L12.5 10 M3 13 L12.5 13 M3 16 L9 16" stroke="#3c3f41" stroke-width="1.4"/></svg>
<div style="position:absolute;left:888.30px;top:65.51px;font:normal normal 18.3px/18.3px 'Liberation Sans',sans-serif;color:#bbbbbb;white-space:pre;letter-spacing:0.3px;">connectsdk-endpoints.http</div>
<svg style="position:absolute;left:1120.5px;top:68.0px;" width="13" height="13" viewBox="0 0 13 13"><path d="M0.8 0.8 L12.2 12.2 M12.2 0.8 L0.8 12.2" stroke="#6e7478" stroke-width="1.4"/></svg>
<div style="position:absolute;left:1144px;top:54.5px;width:362px;height:37.5px;background:#4e5254;"></div>
<div style="position:absolute;left:1144px;top:92px;width:362px;height:4px;background:#4a88c7;"></div>
<svg style="position:absolute;left:1157.2px;top:62.7px;" width="23.6" height="23.6" viewBox="0 0 23.6 23.6"><circle cx="11.8" cy="11.8" r="10.8" fill="#3d88a8"/><path d="M15.40 8.50 A4.4 4.4 0 1 0 15.40 15.10" fill="none" stroke="#262829" stroke-width="1.50" transform="translate(-0.80 0)"/></svg>
<div style="position:absolute;left:1188.00px;top:65.72px;font:normal normal 18.05px/18.05px 'Liberation Sans',sans-serif;color:#bbbbbb;white-space:pre;letter-spacing:0px;">PickupLocationTransformation.java</div>
<svg style="position:absolute;left:1480.5px;top:68.0px;" width="13" height="13" viewBox="0 0 13 13"><path d="M0.8 0.8 L12.2 12.2 M12.2 0.8 L0.8 12.2" stroke="#6e7478" stroke-width="1.4"/></svg>
<svg style="position:absolute;left:1517.2px;top:62.7px;" width="23.6" height="23.6" viewBox="0 0 23.6 23.6"><circle cx="11.8" cy="11.8" r="10.8" fill="#3d88a8"/><path d="M15.40 8.50 A4.4 4.4 0 1 0 15.40 15.10" fill="none" stroke="#262829" stroke-width="1.50" transform="translate(-0.80 0)"/><path d="M16.00 -1.00 L24.30 4.20 L16.00 9.40 Z" fill="#4fa35b"/></svg>
<div style="position:absolute;left:1549.00px;top:65.51px;font:normal normal 18.3px/18.3px 'Liberation Sans',sans-serif;color:#bbbbbb;white-space:pre;letter-spacing:0px;">FluentConnectorApplication.java</div>
<svg style="position:absolute;left:1824.0px;top:68.0px;" width="13" height="13" viewBox="0 0 13 13"><path d="M0.8 0.8 L12.2 12.2 M12.2 0.8 L0.8 12.2" stroke="#6e7478" stroke-width="1.4"/></svg>
<svg style="position:absolute;left:2279px;top:65px;" width="8" height="20" viewBox="0 0 8 20"><circle cx="4" cy="2.5" r="2.2" fill="#bdbdbd"/><circle cx="4" cy="9.5" r="2.2" fill="#bdbdbd"/><circle cx="4" cy="16.5" r="2.2" fill="#bdbdbd"/></svg>
<div style="position:absolute;left:2303px;top:62px;width:21px;height:40px;overflow:hidden"><div style="position:absolute;left:5px;top:0px;font:italic bold 30px/30px 'Liberation Sans',sans-serif;color:#afb1b3">m</div></div>
<div style="position:absolute;left:2287px;top:108px;width:52px;height:19px;transform:rotate(90deg);transform-origin:center;font:17.5px/19px 'Liberation Sans',sans-serif;color:#bbbbbb;white-space:nowrap"></div>
<div style="position:absolute;left:0;top:0;width:2324px;height:1025px;clip-path:inset(54px 0 0 2303px)">
<div style="position:absolute;left:2287.0px;top:113.5px;width:60px;height:19px;transform:rotate(90deg);font:17.5px/19px 'Liberation Sans',sans-serif;color:#bbbbbb;text-align:center;white-space:nowrap">Maven</div>
<svg style="position:absolute;left:2309px;top:179px;" width="20" height="26" viewBox="0 0 20 26"><path d="M4 18 Q4 6 11 5 Q18 6 18 18 L20 20 L2 20Z" fill="#afb1b3"/><circle cx="11" cy="23" r="2.5" fill="#afb1b3"/><circle cx="17" cy="5" r="4.5" fill="#e05555"/></svg>
<div style="position:absolute;left:2262.0px;top:250.0px;width:110px;height:19px;transform:rotate(90deg);font:18.6px/19px 'Liberation Sans',sans-serif;color:#bbbbbb;text-align:center;white-space:nowrap">Notifications</div>
</div>
<div style="position:absolute;left:730px;top:300.76px;width:1572px;height:34.8px;background:#323232;"></div>
<div style="position:absolute;left:729px;top:96px;width:1px;height:929px;background:#4f5152;"></div>
<div style="position:absolute;left:561px;width:87px;top:105.24px;font:20.69px/20.69px 'Liberation Mono',monospace;color:#606366;white-space:pre;text-align:right;transform:scaleX(0.88);transform-origin:100% 50%">1</div>
<div style="position:absolute;left:561px;width:87px;top:139.40px;font:20.69px/20.69px 'Liberation Mono',monospace;color:#606366;white-space:pre;text-align:right;transform:scaleX(0.88);transform-origin:100% 50%">2</div>
<div style="position:absolute;left:561px;width:87px;top:173.56px;font:20.69px/20.69px 'Liberation Mono',monospace;color:#606366;white-space:pre;text-align:right;transform:scaleX(0.88);transform-origin:100% 50%">3</div>
<div style="position:absolute;left:561px;width:87px;top:207.72px;font:20.69px/20.69px 'Liberation Mono',monospace;color:#606366;white-space:pre;text-align:right;transform:scaleX(0.88);transform-origin:100% 50%">21</div>
<div style="position:absolute;left:561px;width:87px;top:241.88px;font:20.69px/20.69px 'Liberation Mono',monospace;color:#606366;white-space:pre;text-align:right;transform:scaleX(0.88);transform-origin:100% 50%">22</div>
<div style="position:absolute;left:561px;width:87px;top:276.04px;font:20.69px/20.69px 'Liberation Mono',monospace;color:#606366;white-space:pre;text-align:right;transform:scaleX(0.88);transform-origin:100% 50%">23</div>
<div style="position:absolute;left:561px;width:87px;top:310.20px;font:20.69px/20.69px 'Liberation Mono',monospace;color:#a4a3a3;white-space:pre;text-align:right;transform:scaleX(0.88);transform-origin:100% 50%">24</div>
<div style="position:absolute;left:561px;width:87px;top:344.36px;font:20.69px/20.69px 'Liberation Mono',monospace;color:#606366;white-space:pre;text-align:right;transform:scaleX(0.88);transform-origin:100% 50%">25</div>
<div style="position:absolute;left:561px;width:87px;top:378.52px;font:20.69px/20.69px 'Liberation Mono',monospace;color:#606366;white-space:pre;text-align:right;transform:scaleX(0.88);transform-origin:100% 50%">26</div>
<div style="position:absolute;left:561px;width:87px;top:446.84px;font:20.69px/20.69px 'Liberation Mono',monospace;color:#606366;white-space:pre;text-align:right;transform:scaleX(0.88);transform-origin:100% 50%">27</div>
<div style="position:absolute;left:561px;width:87px;top:481.00px;font:20.69px/20.69px 'Liberation Mono',monospace;color:#606366;white-space:pre;text-align:right;transform:scaleX(0.88);transform-origin:100% 50%">28</div>
<div style="position:absolute;left:561px;width:87px;top:549.32px;font:20.69px/20.69px 'Liberation Mono',monospace;color:#606366;white-space:pre;text-align:right;transform:scaleX(0.88);transform-origin:100% 50%">29</div>
<div style="position:absolute;left:561px;width:87px;top:617.64px;font:20.69px/20.69px 'Liberation Mono',monospace;color:#606366;white-space:pre;text-align:right;transform:scaleX(0.88);transform-origin:100% 50%">30</div>
<div style="position:absolute;left:561px;width:87px;top:685.96px;font:20.69px/20.69px 'Liberation Mono',monospace;color:#606366;white-space:pre;text-align:right;transform:scaleX(0.88);transform-origin:100% 50%">31</div>
<div style="position:absolute;left:561px;width:87px;top:754.28px;font:20.69px/20.69px 'Liberation Mono',monospace;color:#606366;white-space:pre;text-align:right;transform:scaleX(0.88);transform-origin:100% 50%">32</div>
<div style="position:absolute;left:561px;width:87px;top:822.60px;font:20.69px/20.69px 'Liberation Mono',monospace;color:#606366;white-space:pre;text-align:right;transform:scaleX(0.88);transform-origin:100% 50%">33</div>
<div style="position:absolute;left:561px;width:87px;top:856.76px;font:20.69px/20.69px 'Liberation Mono',monospace;color:#606366;white-space:pre;text-align:right;transform:scaleX(0.88);transform-origin:100% 50%">34</div>
<div style="position:absolute;left:561px;width:87px;top:925.08px;font:20.69px/20.69px 'Liberation Mono',monospace;color:#606366;white-space:pre;text-align:right;transform:scaleX(0.88);transform-origin:100% 50%">35</div>
<div style="position:absolute;left:561px;width:87px;top:959.24px;font:20.69px/20.69px 'Liberation Mono',monospace;color:#606366;white-space:pre;text-align:right;transform:scaleX(0.88);transform-origin:100% 50%">36</div>
<div style="position:absolute;left:561px;width:87px;top:993.40px;font:20.69px/20.69px 'Liberation Mono',monospace;color:#606366;white-space:pre;text-align:right;transform:scaleX(0.88);transform-origin:100% 50%">37</div>
<svg style="position:absolute;left:722.5px;top:176.32px;" width="15" height="15" viewBox="0 0 15 15"><rect x="0.75" y="0.75" width="13" height="13" fill="#2b2b2b" stroke="#5e6062" stroke-width="1.5"/><path d="M3.5 7.25 L10 7.25 M6.75 4 L6.75 10.5" stroke="#6e7072" stroke-width="1.4"/></svg>
<svg style="position:absolute;left:722.5px;top:244.14px;" width="15" height="20" viewBox="0 0 15 20"><path d="M0.75 0.75 L13.75 0.75 L13.75 12.3 L7.25 18.3 L0.75 12.3Z" fill="#313335" stroke="#5e6062" stroke-width="1.5"/><path d="M3.5 6.6 L11 6.6" stroke="#6e7072" stroke-width="1.5"/></svg>
<svg style="position:absolute;left:722.5px;top:308.46px;" width="15" height="20" viewBox="0 0 15 20"><path d="M7.25 0.75 L13.75 6.7 L13.75 18.5 L0.75 18.5 L0.75 6.7Z" fill="#313335" stroke="#5e6062" stroke-width="1.5"/><path d="M3.5 12.6 L11 12.6" stroke="#6e7072" stroke-width="1.5"/></svg>
<svg style="position:absolute;left:722.5px;top:927.3399999999999px;" width="15" height="20" viewBox="0 0 15 20"><path d="M0.75 0.75 L13.75 0.75 L13.75 12.3 L7.25 18.3 L0.75 12.3Z" fill="#313335" stroke="#5e6062" stroke-width="1.5"/><path d="M3.5 6.6 L11 6.6" stroke="#6e7072" stroke-width="1.5"/></svg>
<svg style="position:absolute;left:722.5px;top:991.6599999999999px;" width="15" height="20" viewBox="0 0 15 20"><path d="M7.25 0.75 L13.75 6.7 L13.75 18.5 L0.75 18.5 L0.75 6.7Z" fill="#313335" stroke="#5e6062" stroke-width="1.5"/><path d="M3.5 12.6 L11 12.6" stroke="#6e7072" stroke-width="1.5"/></svg>
<div style="position:absolute;left:0;top:0;width:2324px;height:1025px;clip-path:inset(96px 22px 0 730px)">
<div style="position:absolute;left:826px;top:166.01999999999998px;width:37px;height:33.5px;background:#3b3b3b;"></div>
<div style="position:absolute;left:1174px;top:301.46px;width:12px;height:34px;background:#3b514d;"></div>
<div style="position:absolute;left:1770.228px;top:301.46px;width:12px;height:34px;background:#3b514d;"></div>
<div style="position:absolute;left:739.2px;top:98.51px;font:20.69px/34.16px 'Liberation Mono',monospace;color:#a9b7c6;white-space:pre;letter-spacing:0.002px"><span style="color:#cc7832;">package</span><span style="color:#a9b7c6;"> com.fluentcommerce.connect.custom.transform</span><span style="color:#cc7832;">;</span></div>
<div style="position:absolute;left:739.2px;top:166.83px;font:20.69px/34.16px 'Liberation Mono',monospace;color:#a9b7c6;white-space:pre;letter-spacing:0.002px"><span style="color:#cc7832;">import</span><span style="color:#a9b7c6;"> </span><span style="color:#8c8c8c;">...</span></div>
<div style="position:absolute;left:739.2px;top:235.15px;font:20.69px/34.16px 'Liberation Mono',monospace;color:#a9b7c6;white-space:pre;letter-spacing:0.002px"><span style="color:#bbb529;">@Component</span></div>
<div style="position:absolute;left:739.2px;top:269.31px;font:20.69px/34.16px 'Liberation Mono',monospace;color:#a9b7c6;white-space:pre;letter-spacing:0.002px"><span style="color:#bbb529;">@Slf4j</span></div>
<div style="position:absolute;left:739.2px;top:303.47px;font:20.69px/34.16px 'Liberation Mono',monospace;color:#a9b7c6;white-space:pre;letter-spacing:0.002px"><span style="color:#bbb529;">@FulfilmentOptionTransformationStep</span><span style="color:#ffef28;font-weight:bold">(</span><span style="color:#a9b7c6;">id = </span><span style="color:#6a8759;">&quot;pickup-location-enrichment&quot;</span><span style="color:#cc7832;">, </span><span style="color:#a9b7c6;">priority = </span><span style="color:#6897bb;">1</span><span style="color:#ffef28;font-weight:bold">)</span></div>
<div style="position:absolute;left:739.2px;top:337.63px;font:20.69px/34.16px 'Liberation Mono',monospace;color:#a9b7c6;white-space:pre;letter-spacing:0.002px"><span style="color:#cc7832;">public class </span><span style="color:#868990;">PickupLocationTransformation</span><span style="color:#cc7832;"> implements </span><span style="color:#a9b7c6;">FulfilmentOptionTransformationChain&lt;FulfilmentRequest</span><span style="color:#cc7832;">, </span><span style="color:#a9b7c6;">FulfilmentResponse&gt;</span></div>
<div style="position:absolute;left:789.00px;top:413.84px;font:normal normal 18.9px/18.9px 'Liberation Sans',sans-serif;color:#8c8c8c;white-space:pre;letter-spacing:0px;">2 usages</div>
<div style="position:absolute;left:739.2px;top:440.11px;font:20.69px/34.16px 'Liberation Mono',monospace;color:#a9b7c6;white-space:pre;letter-spacing:0.002px"><span style="color:#cc7832;">    final private </span><span style="color:#a9b7c6;">LocationService </span><span style="color:#9876aa;">locationService</span><span style="color:#cc7832;">;</span></div>
<div style="position:absolute;left:789.00px;top:516.32px;font:normal normal 18.9px/18.9px 'Liberation Sans',sans-serif;color:#8c8c8c;white-space:pre;letter-spacing:0px;">1 usage</div>
<div style="position:absolute;left:739.2px;top:542.59px;font:20.69px/34.16px 'Liberation Mono',monospace;color:#a9b7c6;white-space:pre;letter-spacing:0.002px"><span style="color:#cc7832;">    private static final </span><span style="color:#a9b7c6;">String </span><span style="color:#9876aa;font-style:italic">PICKUP_LOCATION_REF</span><span style="color:#a9b7c6;"> = </span><span style="color:#6a8759;">&quot;pickupLocationRef&quot;</span><span style="color:#cc7832;">;</span></div>
<div style="position:absolute;left:789.00px;top:584.64px;font:normal normal 18.9px/18.9px 'Liberation Sans',sans-serif;color:#8c8c8c;white-space:pre;letter-spacing:0px;">1 usage</div>
<div style="position:absolute;left:739.2px;top:610.91px;font:20.69px/34.16px 'Liberation Mono',monospace;color:#a9b7c6;white-space:pre;letter-spacing:0.002px"><span style="color:#cc7832;">    private static final </span><span style="color:#a9b7c6;">String </span><span style="color:#9876aa;font-style:italic">PICKUP_LOCATION_ADDRESS</span><span style="color:#a9b7c6;"> = </span><span style="color:#6a8759;">&quot;pickupLocationAddress&quot;</span><span style="color:#cc7832;">;</span></div>
<div style="position:absolute;left:789.00px;top:652.96px;font:normal normal 18.9px/18.9px 'Liberation Sans',sans-serif;color:#8c8c8c;white-space:pre;letter-spacing:0px;">1 usage</div>
<div style="position:absolute;left:739.2px;top:679.23px;font:20.69px/34.16px 'Liberation Mono',monospace;color:#a9b7c6;white-space:pre;letter-spacing:0.002px"><span style="color:#cc7832;">    private static final </span><span style="color:#a9b7c6;">String </span><span style="color:#9876aa;font-style:italic">PICKUP_LOCATION_OPENING_TIME</span><span style="color:#a9b7c6;"> = </span><span style="color:#6a8759;">&quot;pickupLocationOpeningTime&quot;</span><span style="color:#cc7832;">;</span></div>
<div style="position:absolute;left:789.00px;top:721.28px;font:normal normal 18.9px/18.9px 'Liberation Sans',sans-serif;color:#8c8c8c;white-space:pre;letter-spacing:0px;">1 usage</div>
<div style="position:absolute;left:739.2px;top:747.55px;font:20.69px/34.16px 'Liberation Mono',monospace;color:#a9b7c6;white-space:pre;letter-spacing:0.002px"><span style="color:#cc7832;">    private static final </span><span style="color:#a9b7c6;">DateTimeFormatter </span><span style="color:#9876aa;font-style:italic">INPUT_DATE_TIME_FORMAT</span><span style="color:#a9b7c6;"> = DateTimeFormatter.</span><span style="color:#a9b7c6;font-style:italic">ofPattern</span><span style="color:#a9b7c6;">(</span><span style="color:#6a8759;">&quot;Hmm&quot;</span><span style="color:#a9b7c6;">)</span><span style="color:#cc7832;">;</span></div>
<div style="position:absolute;left:789.00px;top:789.60px;font:normal normal 18.9px/18.9px 'Liberation Sans',sans-serif;color:#8c8c8c;white-space:pre;letter-spacing:0px;">1 usage</div>
<div style="position:absolute;left:739.2px;top:815.87px;font:20.69px/34.16px 'Liberation Mono',monospace;color:#a9b7c6;white-space:pre;letter-spacing:0.002px"><span style="color:#cc7832;">    private static final </span><span style="color:#a9b7c6;">DateTimeFormatter </span><span style="color:#9876aa;font-style:italic">OUTPUT_DATE_TIME_FORMAT</span><span style="color:#a9b7c6;"> = DateTimeFormatter.</span><span style="color:#a9b7c6;font-style:italic">ofPattern</span><span style="color:#a9b7c6;">(</span><span style="color:#6a8759;">&quot;HH:mm&quot;</span><span style="color:#a9b7c6;">)</span><span style="color:#cc7832;">;</span></div>
<div style="position:absolute;left:789.00px;top:892.08px;font:normal normal 18.9px/18.9px 'Liberation Sans',sans-serif;color:#8c8c8c;white-space:pre;letter-spacing:0px;">1 usage</div>
<div style="position:absolute;left:739.2px;top:918.35px;font:20.69px/34.16px 'Liberation Mono',monospace;color:#a9b7c6;white-space:pre;letter-spacing:0.002px"><span style="color:#cc7832;">    public </span><span style="color:#ffc66d;">PickupLocationTransformation</span><span style="color:#a9b7c6;">(</span><span style="color:#cc7832;">final </span><span style="color:#a9b7c6;">LocationService locationService) {</span></div>
<div style="position:absolute;left:739.2px;top:952.51px;font:20.69px/34.16px 'Liberation Mono',monospace;color:#a9b7c6;white-space:pre;letter-spacing:0.002px"><span style="color:#cc7832;">        this</span><span style="color:#a9b7c6;">.</span><span style="color:#9876aa;">locationService</span><span style="color:#a9b7c6;"> = locationService</span><span style="color:#cc7832;">;</span></div>
<div style="position:absolute;left:739.2px;top:986.67px;font:20.69px/34.16px 'Liberation Mono',monospace;color:#a9b7c6;white-space:pre;letter-spacing:0.002px"><span style="color:#a9b7c6;">    }</span></div>
<div style="position:absolute;left:1782.644px;top:306.96px;width:2px;height:30px;background:#bbbbbb;"></div>
<div style="position:absolute;left:786px;top:950.9999999999999px;width:1px;height:34px;background:#3b3b3b;"></div>
</div>
<div style="position:absolute;left:2229.5px;top:133px;width:1px;height:892px;background:#4f5152;"></div>
<div style="position:absolute;left:2229.5px;top:96px;width:1px;height:3.5px;background:#4f5152;"></div>
<svg style="position:absolute;left:2196px;top:107px;" width="20" height="19" viewBox="0 0 20 19"><path d="M10 0.5 L19 17.5 L1 17.5Z" fill="#d9a521"/><rect x="8.6" y="6" width="2.8" height="5" fill="#1f2326"/><rect x="8.6" y="12.8" width="2.8" height="2.6" fill="#1f2326"/></svg>
<svg style="position:absolute;left:2220px;top:109px;" width="8" height="15" viewBox="0 0 8 15"><path d="M0.8 3.5 L4.6 1 L4.6 14" fill="none" stroke="#c5c5c5" stroke-width="1.9" stroke-linejoin="round"/></svg>
<svg style="position:absolute;left:2244px;top:110px;" width="14" height="9" viewBox="0 0 14 9"><path d="M1 8 L7 2 L13 8" fill="none" stroke="#bdbdbd" stroke-width="1.6"/></svg>
<svg style="position:absolute;left:2276px;top:112px;" width="14" height="9" viewBox="0 0 14 9"><path d="M1 1 L7 7 L13 1" fill="none" stroke="#bdbdbd" stroke-width="1.6"/></svg>
<div style="position:absolute;left:2286px;top:139.5px;width:12px;height:183px;border-radius:6px;background:#4a4c4e"></div>
<div style="position:absolute;left:2280px;top:182px;width:22px;height:3px;background:#d8a51f;"></div>
</div></body></html>
